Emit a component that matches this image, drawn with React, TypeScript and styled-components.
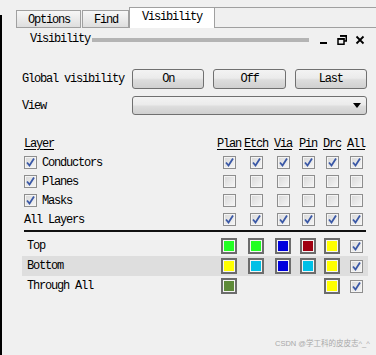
import React from 'react'
import styled, { createGlobalStyle } from 'styled-components'

const GlobalStyle = createGlobalStyle`
  html, body {
    margin: 0;
    padding: 0;
    background: #f0f0f0;
  }
  body {
    font-family: 'Liberation Mono', 'DejaVu Sans Mono', monospace;
    font-size: 12px;
    letter-spacing: -1.2px;
    color: #000;
  }
`

const Window = styled.div`
  position: relative;
  width: 376px;
  height: 355px;
  display: flex;
  background: #f0f0f0;
  overflow: hidden;
`

const LeftEdge = styled.div`
  width: 3px;
  margin-top: 15px;
  background: #000;
`

const Main = styled.div`
  flex: 1;
  display: flex;
  flex-direction: column;
`

const TabBar = styled.div`
  height: 28px;
  display: flex;
  align-items: flex-end;
  padding-left: 13px;
`

const Tab = styled.div<{ $active?: boolean }>`
  box-sizing: border-box;
  height: ${({ $active }) => ($active ? '21px' : '18px')};
  padding: ${({ $active }) => ($active ? '2px 12px 0 12px' : '2px 10px 0 11px')};
  margin-left: ${({ $active }) => ($active ? '0' : '1px')};
  border: 1px solid #a0a0a0;
  border-bottom: ${({ $active }) => ($active ? 'none' : '1px solid #a0a0a0')};
  background: ${({ $active }) =>
    $active ? '#ffffff' : 'linear-gradient(#f7f7f7, #dedede)'};
  line-height: 14px;
`

const TabFill = styled.div`
  flex: 1;
  height: 21px;
  box-sizing: border-box;
  border-top: 1px solid #a0a0a0;
  border-bottom: 1px solid #a0a0a0;
`

const TitleRow = styled.div`
  height: 22px;
  display: flex;
  align-items: center;
  padding: 0 10px 0 28px;
`

const TitleText = styled.span`
  line-height: 14px;
`

const TitleBar = styled.div`
  width: 217px;
  height: 4px;
  background: #b4b4b4;
  margin-left: 2px;
  margin-top: 2px;
`

const TitleButtons = styled.div`
  display: flex;
  align-items: center;
  gap: 7px;
  margin-left: 10px;
  margin-top: 1px;
`

const Controls = styled.div`
  display: flex;
  flex-direction: column;
  gap: 7px;
  padding: 19px 9px 0 20px;
`

const ControlRow = styled.div`
  display: flex;
  align-items: center;
`

const Label = styled.span`
  width: 110px;
  flex-shrink: 0;
`

const ButtonGroup = styled.div`
  flex: 1;
  display: flex;
  gap: 9px;
`

const PushButton = styled.div`
  flex: 1;
  height: 20px;
  box-sizing: border-box;
  border: 1px solid #707070;
  border-radius: 3px;
  background: linear-gradient(#f3f3f3 0%, #ebebeb 45%, #dddddd 55%, #d0d0d0 100%);
  display: flex;
  align-items: center;
  justify-content: center;
`

const Dropdown = styled.div`
  flex: 1;
  height: 19px;
  box-sizing: border-box;
  border: 1px solid #707070;
  border-radius: 3px;
  background: linear-gradient(#f3f3f3 0%, #ebebeb 45%, #dddddd 55%, #d0d0d0 100%);
  display: flex;
  align-items: center;
  justify-content: flex-end;
  padding-right: 5px;
`

const gridColumns = '1fr 26px 28px 26px 24px 24px 24px'

const Table = styled.div`
  display: grid;
  grid-template-columns: ${gridColumns};
  grid-auto-rows: 19px;
  align-items: center;
  margin: 19px 8px 0 22px;
`

const Cell = styled.div`
  display: flex;
  justify-content: center;
  align-items: center;
`

const LayerCell = styled.div`
  display: flex;
  align-items: center;
  gap: 5px;
`

const HeaderText = styled.span`
  text-decoration: underline;
  text-underline-offset: 2px;
`

const Separator = styled.div`
  height: 2px;
  background: #111;
  margin: 1px 10px 4px 22px;
`

const ColorTable = styled.div`
  display: grid;
  grid-template-columns: ${gridColumns};
  grid-auto-rows: 20px;
  margin: 0 8px 0 20px;
`

const ColorRow = styled.div<{ $shaded?: boolean }>`
  display: contents;
  & > div {
    background: ${({ $shaded }) => ($shaded ? '#dedede' : 'transparent')};
  }
`

const ColorLabel = styled.div`
  display: flex;
  align-items: center;
  padding-left: 5px;
`

const Swatch = styled.div<{ $color: string }>`
  width: 16px;
  height: 16px;
  box-sizing: border-box;
  border: 2px solid #6c6c6c;
  box-shadow: inset 0 0 0 1px #f4f4f4;
  background: ${({ $color }) => $color};
`

const Box = styled.div`
  width: 13px;
  height: 13px;
  box-sizing: border-box;
  border: 1px solid #8e8e8e;
  box-shadow: inset 0 0 0 1px #f4f4f4;
  background: linear-gradient(135deg, #d8d8d8, #f6f6f6);
  display: flex;
  align-items: center;
  justify-content: center;
`

const Watermark = styled.div`
  position: absolute;
  left: 275px;
  top: 337px;
  white-space: nowrap;
  font-family: 'Liberation Sans', 'Noto Sans CJK SC', sans-serif;
  font-size: 7.5px;
  letter-spacing: 0;
  color: #a9a9a9;
`

const Check = ({ on }: { on: boolean }) => (
  <Box>
    {on && (
      <svg width="9" height="9" viewBox="0 0 9 9">
        <path d="M1 4.5 L3.5 7.5 L8 0.5" fill="none" stroke="#3a58a6" strokeWidth="1.8" />
      </svg>
    )}
  </Box>
)

const columns = ['Plan', 'Etch', 'Via', 'Pin', 'Drc', 'All']

const layers = [
  { name: 'Conductors', box: true, checks: [true, true, true, true, true, true] },
  { name: 'Planes', box: true, checks: [false, false, false, false, false, false] },
  { name: 'Masks', box: true, checks: [false, false, false, false, false, false] },
  { name: 'All Layers', box: false, checks: [true, true, true, true, true, true] },
]

const colorRows: { name: string; colors: (string | null)[]; shaded?: boolean }[] = [
  { name: 'Top', colors: ['#22ff22', '#22ff22', '#0000dd', '#a00012', '#ffff00'] },
  { name: 'Bottom', colors: ['#ffff00', '#00c0e6', '#0000dd', '#00c0e6', '#ffff00'], shaded: true },
  { name: 'Through All', colors: ['#5e8a38', null, null, null, '#ffff00'] },
]

const App = () => {
  return (
    <Window>
      <GlobalStyle />
      <LeftEdge />
      <Main>
        <TabBar>
          <Tab>Options</Tab>
          <Tab>Find</Tab>
          <Tab $active>Visibility</Tab>
          <TabFill />
        </TabBar>
        <TitleRow>
          <TitleText>Visibility</TitleText>
          <TitleBar />
          <TitleButtons>
            <svg width="11" height="10" viewBox="0 0 11 10">
              <rect x="1" y="7" width="7" height="2" fill="#000" />
            </svg>
            <svg width="11" height="10" viewBox="0 0 11 10">
              <path d="M3 0.75 H9.25 V6 H7" fill="none" stroke="#000" strokeWidth="1.5" />
              <rect x="3" y="0" width="6.5" height="1.8" fill="#000" />
              <rect x="1" y="3.75" width="6" height="5.5" fill="none" stroke="#000" strokeWidth="1.5" />
              <rect x="1" y="3" width="6.5" height="1.8" fill="#000" />
            </svg>
            <svg width="11" height="10" viewBox="0 0 11 10">
              <path d="M1.5 1.5 L8.5 8.5 M8.5 1.5 L1.5 8.5" stroke="#000" strokeWidth="1.8" />
            </svg>
          </TitleButtons>
        </TitleRow>
        <Controls>
          <ControlRow>
            <Label>Global visibility</Label>
            <ButtonGroup>
              <PushButton>On</PushButton>
              <PushButton>Off</PushButton>
              <PushButton>Last</PushButton>
            </ButtonGroup>
          </ControlRow>
          <ControlRow>
            <Label>View</Label>
            <Dropdown>
              <svg width="8" height="5" viewBox="0 0 8 5">
                <path d="M0 0 H8 L4 5 Z" fill="#000" />
              </svg>
            </Dropdown>
          </ControlRow>
        </Controls>
        <Table>
          <LayerCell>
            <HeaderText>Layer</HeaderText>
          </LayerCell>
          {columns.map((c) => (
            <Cell key={c}>
              <HeaderText>{c}</HeaderText>
            </Cell>
          ))}
          {layers.map((l) => (
            <React.Fragment key={l.name}>
              <LayerCell>
                {l.box && <Check on />}
                <span>{l.name}</span>
              </LayerCell>
              {l.checks.map((on, i) => (
                <Cell key={i}>
                  <Check on={on} />
                </Cell>
              ))}
            </React.Fragment>
          ))}
        </Table>
        <Separator />
        <ColorTable>
          {colorRows.map((r) => (
            <ColorRow key={r.name} $shaded={r.shaded}>
              <ColorLabel>{r.name}</ColorLabel>
              {r.colors.map((c, i) => (
                <Cell key={i}>{c && <Swatch $color={c} />}</Cell>
              ))}
              <Cell>
                <Check on />
              </Cell>
            </ColorRow>
          ))}
        </ColorTable>
      </Main>
      <Watermark>CSDN @学工科的皮皮志^_^</Watermark>
    </Window>
  )
}

export default App
